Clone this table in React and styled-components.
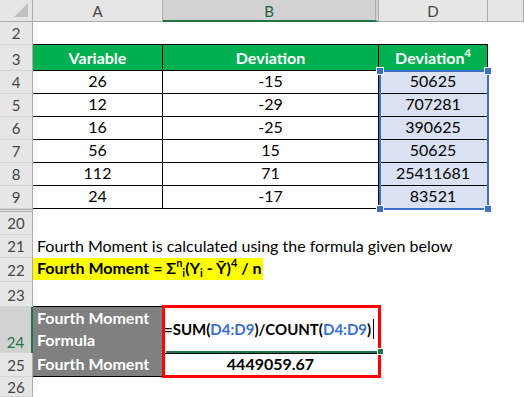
import React from 'react';
import styled, { createGlobalStyle, css } from 'styled-components';

const GlobalStyle = createGlobalStyle`
  body {
    margin: 0;
    background: #ffffff;
    font-family: Lato, "Liberation Sans", sans-serif;
  }
  * { box-sizing: border-box; }
`;

const COLS = '33px 130px 216px 109px 1fr';
const GREEN = '#217346';

const rows = [
  { n: 4, a: '26', b: '-15', d: '50625' },
  { n: 5, a: '12', b: '-29', d: '707281' },
  { n: 6, a: '16', b: '-25', d: '390625' },
  { n: 7, a: '56', b: '15', d: '50625' },
  { n: 8, a: '112', b: '71', d: '25411681' },
  { n: 9, a: '24', b: '-17', d: '83521' },
];

function Sheet() {
  return (
    <Page>
      <GlobalStyle />
      <Row $h={22}>
        <Corner />
        <ColHead>A</ColHead>
        <ColHead $active $hidden>B</ColHead>
        <ColHead>D</ColHead>
        <ColHead />
      </Row>

      <Row $h={23}>
        <RowHead>2</RowHead>
        <Cell $line="bottom" />
        <Cell $line="bottom" />
        <Cell $line="bottom" />
        <Cell />
      </Row>

      <Row $h={26}>
        <RowHead>3</RowHead>
        <Cell $table $bg="#00b050" $color="#fff" $bold $align="center">Variable</Cell>
        <Cell $table $bg="#00b050" $color="#fff" $bold $align="center">Deviation</Cell>
        <Cell $table $bg="#00b050" $color="#fff" $bold $align="center">
          <span>Deviation<Sup>4</Sup></span>
        </Cell>
        <Cell />
      </Row>

      <Block>
        {rows.map((r) => (
          <Row key={r.n} $h={23}>
            <RowHead>{r.n}</RowHead>
            <Cell $table $align="center">{r.a}</Cell>
            <Cell $table $align="center">{r.b}</Cell>
            <Cell $table $align="center" $bg="#d9e1f2">{r.d}</Cell>
            <Cell />
          </Row>
        ))}
        <Selection>
          <Handle $x="left" $y="top" />
          <Handle $x="right" $y="top" />
          <Handle $x="left" $y="bottom" />
          <Handle $x="right" $y="bottom" />
        </Selection>
      </Block>

      <Row $h={26}>
        <RowHead $gap>20</RowHead>
        <Cell />
        <Cell />
        <Cell />
        <Cell />
      </Row>

      <Row $h={23}>
        <RowHead>21</RowHead>
        <Cell $span>Fourth Moment is calculated using the formula given below</Cell>
      </Row>

      <Row $h={24}>
        <RowHead>22</RowHead>
        <Cell $span $pad={0}>
          <Highlight>
            <span>
              Fourth Moment = Σ<Sup>n</Sup><Sub>i</Sub>(Y<Sub>i</Sub> - Ȳ)<Sup>4</Sup> / n
            </span>
          </Highlight>
        </Cell>
      </Row>

      <Row $h={25}>
        <RowHead>23</RowHead>
        <Cell $line="bottom" />
        <Cell />
        <Cell />
        <Cell />
      </Row>

      <Block>
        <Row $h={46}>
          <RowHead $active>24</RowHead>
          <Cell $table $bg="#808080" $color="#fff" $bold $wrap>Fourth Moment Formula</Cell>
          <Cell $table $bold $valign="center" $pad={1}>
            <Formula>
              <span>=SUM(<Ref>D4:D9</Ref>)/COUNT(<Ref>D4:D9</Ref>)</span>
              <Caret />
            </Formula>
          </Cell>
          <Cell />
          <Cell />
        </Row>
        <Row $h={24}>
          <RowHead>25</RowHead>
          <Cell $table $bg="#808080" $color="#fff" $bold>Fourth Moment</Cell>
          <Cell $table $bold $align="center">4449059.67</Cell>
          <Cell />
          <Cell />
        </Row>
        <RedBox>
          <ActiveEdge />
        </RedBox>
      </Block>

      <Row $h={20}>
        <RowHead $last>26</RowHead>
        <Cell />
        <Cell />
        <Cell />
        <Cell />
      </Row>
    </Page>
  );
}

const Page = styled.div`
  width: 524px;
  height: 397px;
  overflow: hidden;
  background: #ffffff;
  font-size: 16px;
  color: #000;
`;

const Row = styled.div`
  display: grid;
  grid-template-columns: ${COLS};
  height: ${(p) => p.$h}px;
`;

const Block = styled.div`
  position: relative;
`;

const Corner = styled.div`
  position: relative;
  background: #e6e6e6;
  border-right: 1px solid #ababab;
  border-bottom: 1px solid #ababab;

  &::after {
    content: '';
    position: absolute;
    right: 4px;
    bottom: 4px;
    width: 0;
    height: 0;
    border-left: 14px solid transparent;
    border-bottom: 14px solid #c0c0c0;
  }
`;

const ColHead = styled.div`
  display: flex;
  align-items: center;
  justify-content: center;
  background: #e6e6e6;
  color: #444;
  font-size: 15px;
  border-right: 1px solid #ababab;
  border-bottom: 1px solid #ababab;
  ${(p) =>
    p.$active &&
    css`
      background: #d2d2d2;
      color: #1e5e3a;
      border-bottom: 2px solid ${GREEN};
      padding-top: 1px;
    `}
  ${(p) =>
    p.$hidden &&
    css`
      border-right: 4px double #ababab;
    `}
`;

const RowHead = styled.div`
  display: flex;
  align-items: ${(p) => (p.$last ? 'center' : 'flex-end')};
  justify-content: center;
  padding-bottom: ${(p) => (p.$last ? 0 : 2)}px;
  background: #e6e6e6;
  color: #444;
  font-size: 15px;
  border-right: 1px solid #ababab;
  border-bottom: 1px solid #d4d4d4;
  ${(p) =>
    p.$gap &&
    css`
      border-top: 3px double #ababab;
    `}
  ${(p) =>
    p.$active &&
    css`
      background: #d2d2d2;
      color: ${GREEN};
      border-right: 2px solid ${GREEN};
    `}
`;

const Cell = styled.div`
  display: flex;
  align-items: ${(p) => (p.$valign === 'center' ? 'center' : 'flex-end')};
  justify-content: ${(p) => (p.$align === 'center' ? 'center' : 'flex-start')};
  padding: 0 ${(p) => (p.$pad ?? 4)}px 2px;
  background: ${(p) => p.$bg || 'transparent'};
  color: ${(p) => p.$color || '#000'};
  font-weight: ${(p) => (p.$bold ? 700 : 400)};
  white-space: ${(p) => (p.$wrap ? 'normal' : 'nowrap')};
  line-height: ${(p) => (p.$wrap ? 22 : 20)}px;
  ${(p) => p.$span && 'grid-column: 2 / -1;'}
  ${(p) =>
    p.$table &&
    css`
      border-right: 1px solid #000;
      border-bottom: 1px solid #000;
    `}
  ${(p) => p.$line === 'bottom' && 'border-bottom: 1px solid #000;'}
`;

const Sup = styled.sup`
  font-size: 11px;
  line-height: 0;
  vertical-align: 7px;
`;

const Sub = styled.sub`
  font-size: 11px;
  line-height: 0;
  vertical-align: -3px;
`;

const Highlight = styled.div`
  display: flex;
  align-items: flex-end;
  height: 100%;
  padding: 0 1px 2px 4px;
  background: #ffff00;
  font-weight: 700;
  white-space: pre;
`;

const Formula = styled.div`
  display: flex;
  align-items: center;
  font-size: 15px;
  font-weight: 700;
`;

const Ref = styled.span`
  color: #3b6fd0;
`;

const Caret = styled.span`
  display: inline-block;
  width: 1px;
  height: 20px;
  margin-left: 2px;
  background: #000;
`;

const Selection = styled.div`
  position: absolute;
  top: -1px;
  left: 379px;
  width: 110px;
  bottom: -1px;
  border: 2px solid #3d6fc6;
  pointer-events: none;
`;

const Handle = styled.div`
  position: absolute;
  width: 6px;
  height: 6px;
  background: #3d6fc6;
  outline: 1px solid #ffffff;
  ${(p) => (p.$x === 'left' ? 'left: -4px;' : 'right: -4px;')}
  ${(p) => (p.$y === 'top' ? 'top: -4px;' : 'bottom: -4px;')}
`;

const RedBox = styled.div`
  position: absolute;
  top: -2px;
  left: 162px;
  width: 219px;
  height: 73px;
  border: 3px solid #ff0000;
  pointer-events: none;
`;

const ActiveEdge = styled.div`
  position: absolute;
  left: 1px;
  right: 0;
  top: 43px;
  height: 2px;
  background: ${GREEN};

  &::after {
    content: '';
    position: absolute;
    right: -5px;
    top: -2px;
    width: 5px;
    height: 5px;
    background: ${GREEN};
    outline: 1px solid #fff;
  }
`;

export default Sheet;
